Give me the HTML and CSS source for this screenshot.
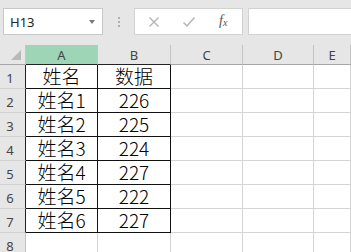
FILE: index.html
```html
<!DOCTYPE html>
<html lang="zh">
<head>
<meta charset="utf-8">
<link rel="stylesheet" href="styles.css">
</head>
<body>
<div class="app">
  <div class="toolbar">
    <div class="namebox"><span class="ref">H13</span><span class="caret"></span></div>
    <div class="grip"><i></i><i></i><i></i></div>
    <div class="fbtns">
      <svg class="ico" width="12" height="12" viewBox="0 0 12 12"><path d="M1.5 1.5 L10.5 10.5 M10.5 1.5 L1.5 10.5" stroke="#b4b4b4" stroke-width="1.4" fill="none"/></svg>
      <svg class="ico" width="14" height="12" viewBox="0 0 14 12"><path d="M1.5 6.5 L5 10 L12.5 1.5" stroke="#b4b4b4" stroke-width="1.5" fill="none"/></svg>
      <span class="fx"><i>f</i><sub>x</sub></span>
    </div>
    <div class="finput"></div>
  </div>
  <div class="sheet">
    <div class="corner"><span class="tri"></span></div>
    <div class="colh sel tb">A</div>
    <div class="colh tb">B</div>
    <div class="colh">C</div>
    <div class="colh">D</div>
    <div class="colh">E</div>

    <div class="rowh tl">1</div><div class="cell t">姓名</div><div class="cell t">数据</div><div class="cell"></div><div class="cell"></div><div class="cell"></div>
    <div class="rowh tl">2</div><div class="cell t">姓名1</div><div class="cell t">226</div><div class="cell"></div><div class="cell"></div><div class="cell"></div>
    <div class="rowh tl">3</div><div class="cell t">姓名2</div><div class="cell t">225</div><div class="cell"></div><div class="cell"></div><div class="cell"></div>
    <div class="rowh tl">4</div><div class="cell t">姓名3</div><div class="cell t">224</div><div class="cell"></div><div class="cell"></div><div class="cell"></div>
    <div class="rowh tl">5</div><div class="cell t">姓名4</div><div class="cell t">227</div><div class="cell"></div><div class="cell"></div><div class="cell"></div>
    <div class="rowh tl">6</div><div class="cell t">姓名5</div><div class="cell t">222</div><div class="cell"></div><div class="cell"></div><div class="cell"></div>
    <div class="rowh tl">7</div><div class="cell t">姓名6</div><div class="cell t">227</div><div class="cell"></div><div class="cell"></div><div class="cell"></div>
    <div class="rowh">8</div><div class="cell"></div><div class="cell"></div><div class="cell"></div><div class="cell"></div><div class="cell"></div>
  </div>
</div>
</body>
</html>
```

FILE: styles.css
```css
* { box-sizing: border-box; }
html, body { margin: 0; padding: 0; }
body {
  width: 351px;
  height: 252px;
  overflow: hidden;
  background: #e6e6e6;
  font-family: "Noto Sans", "Noto Sans CJK SC", sans-serif;
}
.app { width: 351px; height: 252px; overflow: hidden; }

.toolbar {
  display: flex;
  align-items: flex-start;
  height: 45px;
  padding-top: 8px;
}
.namebox {
  position: relative;
  margin-left: 3px;
  width: 100px;
  height: 27px;
  background: #fff;
  border: 1px solid #c8c8c8;
  display: flex;
  align-items: center;
  padding-left: 6px;
}
.ref { font-size: 13px; color: #222; }
.caret {
  position: absolute;
  right: 7px;
  top: 11px;
  width: 0; height: 0;
  border-left: 3.5px solid transparent;
  border-right: 3.5px solid transparent;
  border-top: 4px solid #7a7a7a;
}
.grip {
  width: 31px;
  height: 27px;
  display: flex;
  flex-direction: column;
  align-items: center;
  justify-content: center;
  gap: 2px;
}
.grip i { display: block; width: 2px; height: 2px; background: #b0b0b0; }
.fbtns {
  width: 109px;
  height: 27px;
  background: #fff;
  border: 1px solid #d2d2d2;
  display: flex;
  align-items: center;
  padding-left: 13px;
}
.fbtns .ico:nth-child(1) { margin-right: 22px; }
.fbtns .ico:nth-child(2) { margin-right: 23px; }
.fx {
  font-family: "Liberation Serif", serif;
  font-size: 14px;
  color: #555;
  font-style: italic;
  line-height: 1;
  margin-top: -2px;
}
.fx sub { font-size: 10px; vertical-align: -1px; }
.finput {
  flex: 1;
  margin-left: 5px;
  height: 27px;
  background: #fff;
  border: 1px solid #d2d2d2;
  border-right: none;
}

.sheet {
  display: grid;
  grid-template-columns: 26px 72px 73px 72px 71px 1fr;
  grid-template-rows: 20px repeat(8, 24px);
  background: #fff;
}
.corner {
  position: relative;
  background: #e6e6e6;
  border-right: 1px solid #c4c4c4;
  border-bottom: 1px solid #a6a6a6;
}
.tri {
  position: absolute;
  right: 4px;
  bottom: 4px;
  width: 0; height: 0;
  border-left: 10px solid transparent;
  border-bottom: 10px solid #b9b9b9;
}
.colh {
  background: #e6e6e6;
  border-right: 1px solid #c4c4c4;
  border-bottom: 1px solid #a6a6a6;
  font-size: 13px;
  color: #444;
  text-align: center;
  line-height: 19px;
  padding-top: 1px;
}
.colh.sel { background: #9fd5b7; }
.colh.tb { border-bottom-color: #222; }
.rowh {
  background: #e6e6e6;
  border-right: 1px solid #c4c4c4;
  border-bottom: 1px solid #d2d2d2;
  font-size: 13px;
  color: #444;
  text-align: center;
  padding-right: 5px;
  line-height: 13px;
  padding-top: 7px;
}
.rowh.tl { border-right-color: #222; }
.cell {
  border-right: 1px solid #d4d4d4;
  border-bottom: 1px solid #d4d4d4;
  font-family: "Noto Sans CJK SC", sans-serif;
  font-weight: 300;
  font-size: 19px;
  color: #000;
  text-align: center;
  line-height: 21px;
}
.cell.t { border-right-color: #111; border-bottom-color: #111; }
```
